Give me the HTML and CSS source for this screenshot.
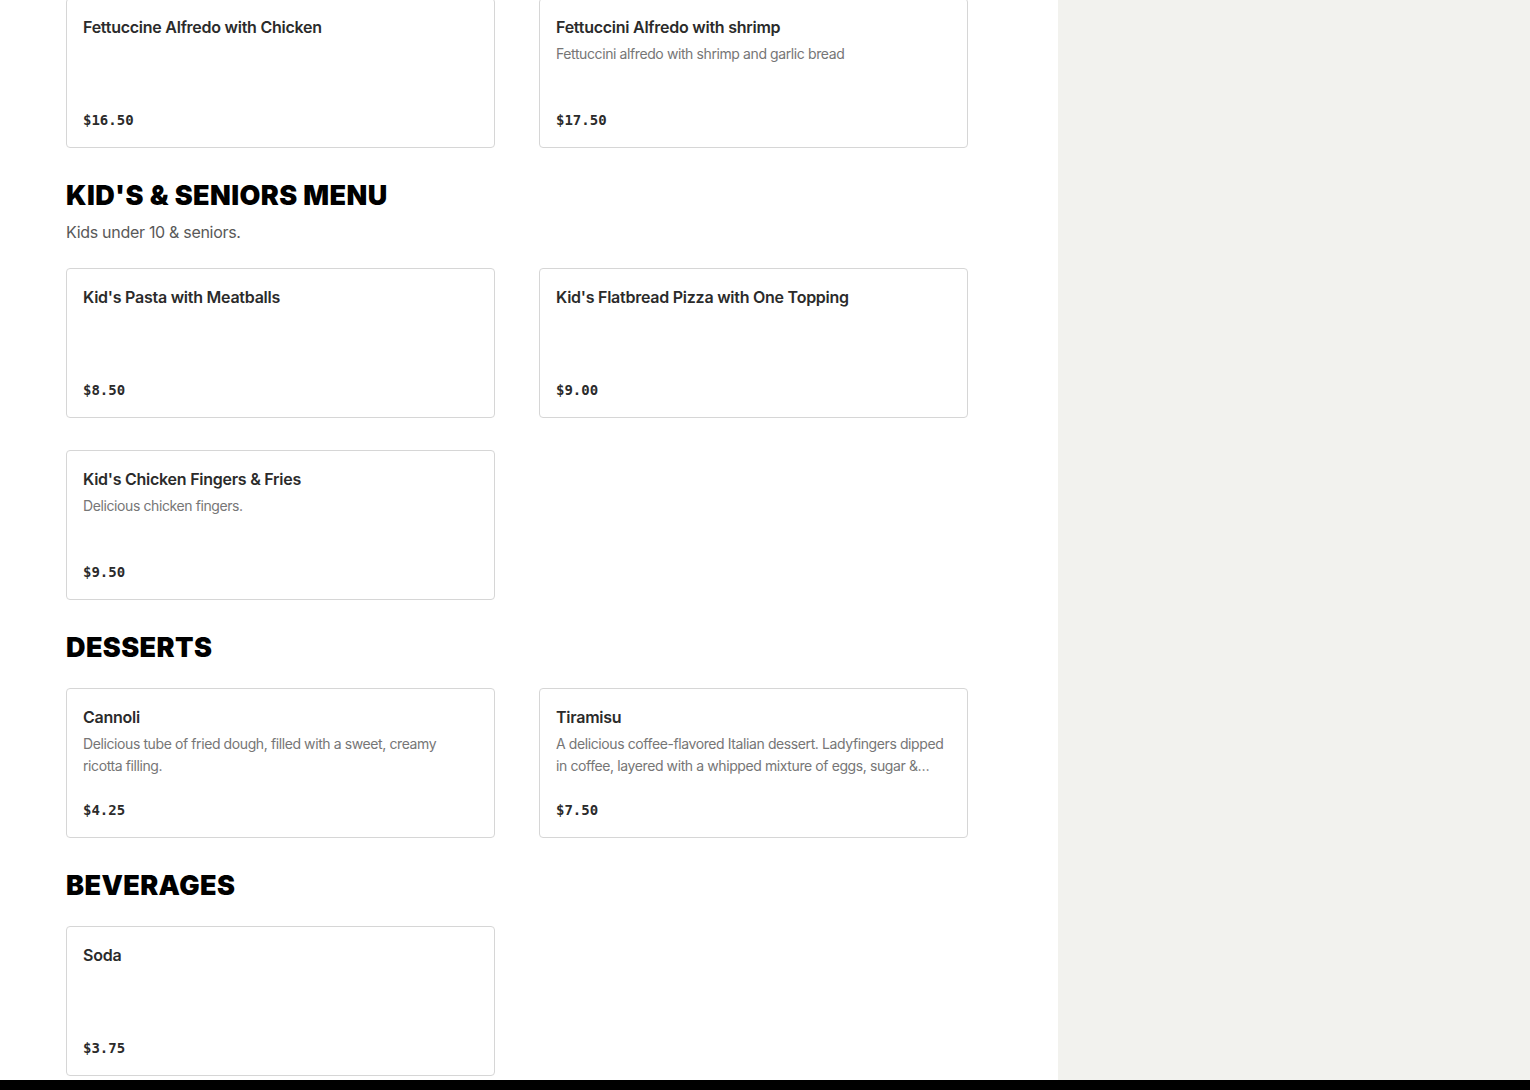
FILE: index.html
```html
<!DOCTYPE html>
<html lang="en">
  <head>
    <meta charset="UTF-8">
    <meta name="viewport" content="width=device-width, initial-scale=1.0">
    <title>Menu</title>
    <link rel="stylesheet" href="styles.css">
  </head>
  <body>
    <div class="page">
      <main class="menu">
        <section class="section first">
          <div class="items">
            <div class="item">
              <div class="item-name">Fettuccine Alfredo with Chicken</div>
              <div class="item-price">$16.50</div>
            </div>
            <div class="item">
              <div class="item-name">Fettuccini Alfredo with shrimp</div>
              <div class="item-desc">Fettuccini alfredo with shrimp and garlic bread</div>
              <div class="item-price">$17.50</div>
            </div>
          </div>
        </section>

        <section class="section">
          <h2>KID'S &amp; SENIORS MENU</h2>
          <p class="section-note">Kids under 10 &amp; seniors.</p>
          <div class="items">
            <div class="item">
              <div class="item-name">Kid's Pasta with Meatballs</div>
              <div class="item-price">$8.50</div>
            </div>
            <div class="item">
              <div class="item-name">Kid's Flatbread Pizza with One Topping</div>
              <div class="item-price">$9.00</div>
            </div>
            <div class="item">
              <div class="item-name">Kid's Chicken Fingers &amp; Fries</div>
              <div class="item-desc">Delicious chicken fingers.</div>
              <div class="item-price">$9.50</div>
            </div>
          </div>
        </section>

        <section class="section">
          <h2>DESSERTS</h2>
          <div class="items">
            <div class="item">
              <div class="item-name">Cannoli</div>
              <div class="item-desc">Delicious tube of fried dough, filled with a sweet, creamy ricotta filling.</div>
              <div class="item-price">$4.25</div>
            </div>
            <div class="item">
              <div class="item-name">Tiramisu</div>
              <div class="item-desc">A delicious coffee-flavored Italian dessert. Ladyfingers dipped in coffee, layered with a whipped mixture of eggs, sugar &amp; mascarpone cheese, flavored with cocoa.</div>
              <div class="item-price">$7.50</div>
            </div>
          </div>
        </section>

        <section class="section">
          <h2>BEVERAGES</h2>
          <div class="items">
            <div class="item">
              <div class="item-name">Soda</div>
              <div class="item-price">$3.75</div>
            </div>
          </div>
        </section>
      </main>
      <aside class="side"></aside>
    </div>
    <footer class="footer"></footer>
  </body>
</html>
```

FILE: styles.css
```css
body { margin: 0; font-family: Inter, "Noto Sans", sans-serif; background: #fff; color: #2b2b2b; height: 1090px; overflow: hidden; }
.page { display: flex; height: 1080px; overflow: hidden; }
.menu { width: 1058px; box-sizing: border-box; padding: 0 90px 0 66px; background: #fff; }
.side { flex: 1; background: #f2f2ee; }
.footer { height: 40px; background: #000; }

.section { margin-top: 30px; }
.section.first { margin-top: -2px; }
.section h2 { margin: 0 0 22px; font-size: 27px; line-height: 36px; font-weight: 900; color: #000; letter-spacing: 0.4px; }
.section-note { margin: -18px 0 22px; font-size: 16px; line-height: 28px; color: #595959; letter-spacing: -0.3px; }

.items { display: grid; grid-template-columns: 429px 429px; column-gap: 44px; row-gap: 32px; }
.item { height: 150px; box-sizing: border-box; border: 1px solid #d6d6d6; border-radius: 4px; padding: 16px; display: flex; flex-direction: column; }
.item-name { font-size: 16px; line-height: 24px; font-weight: 600; color: #2b2b2b; letter-spacing: -0.25px; }
.item-desc { margin-top: 4px; font-size: 14px; line-height: 22px; color: #767676; letter-spacing: -0.4px; overflow: hidden; display: -webkit-box; -webkit-line-clamp: 2; -webkit-box-orient: vertical; }
.item-price { margin-top: auto; font-family: "DejaVu Sans Mono", "Liberation Mono", monospace; font-weight: bold; font-size: 14px; line-height: 22px; color: #2b2b2b; }
```
